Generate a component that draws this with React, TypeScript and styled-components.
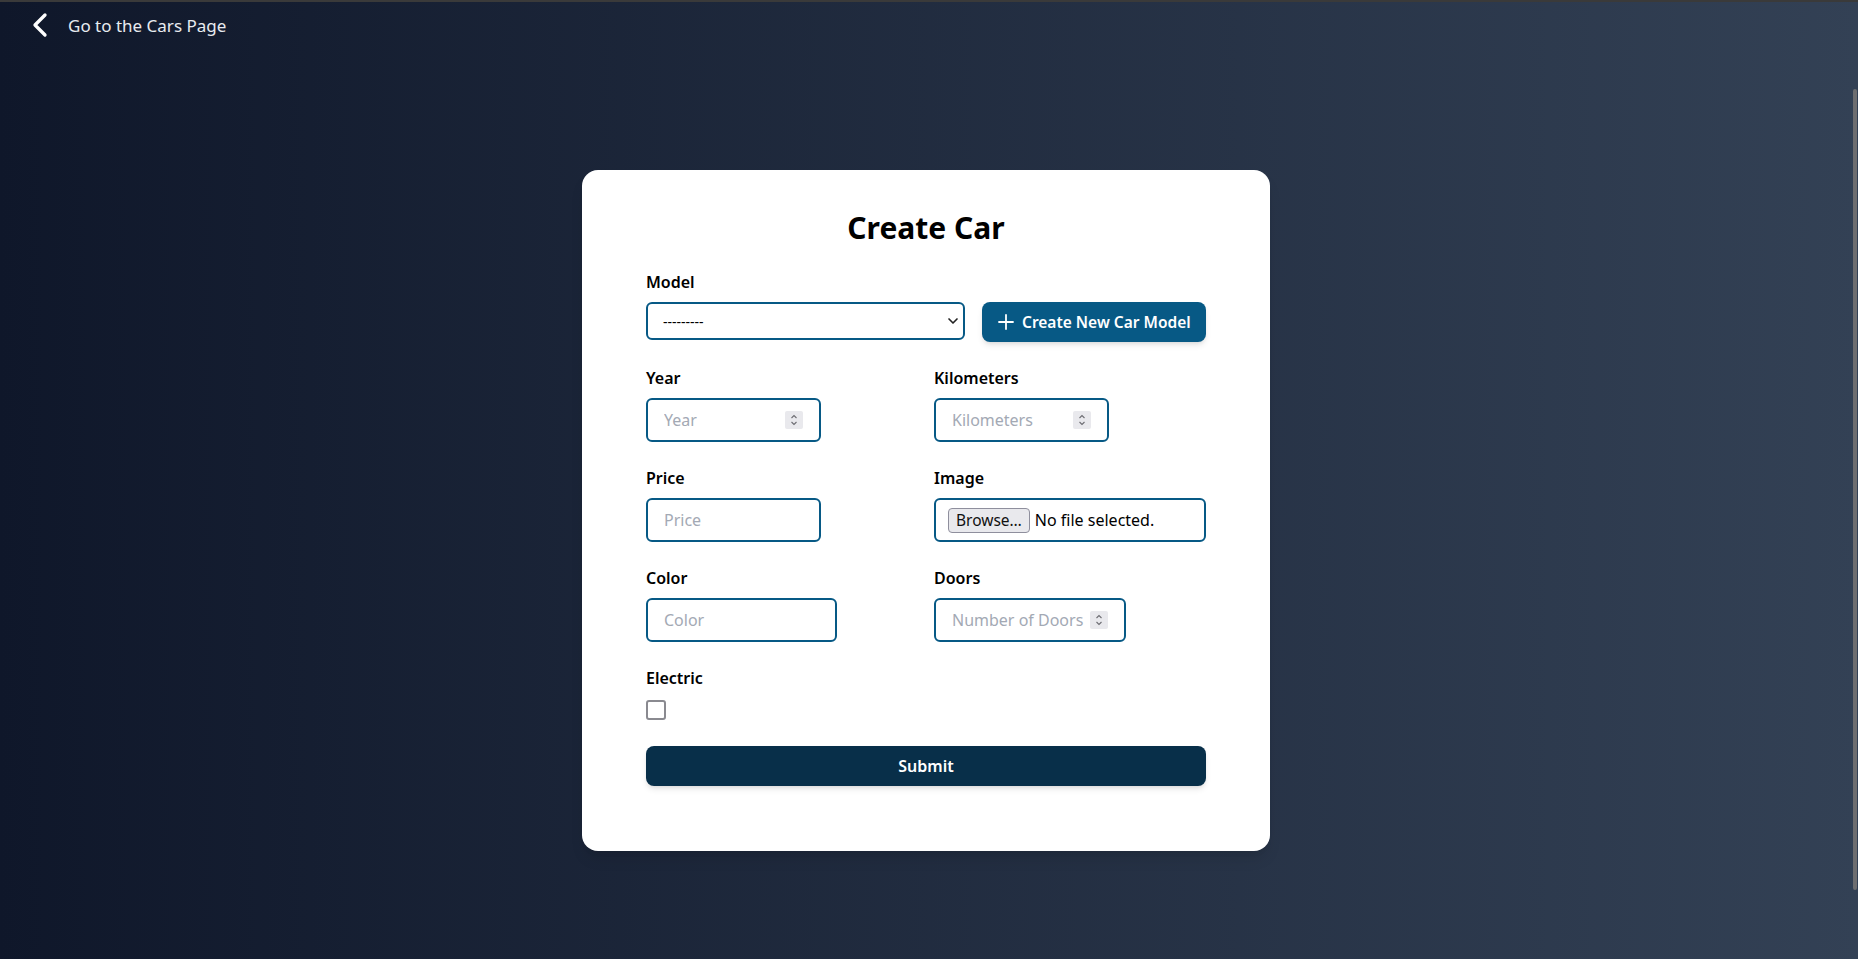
import React from 'react';
import styled, { createGlobalStyle } from 'styled-components';
import { ChevronLeft, ChevronDown, Plus } from 'lucide-react';

const GlobalStyle = createGlobalStyle`
  * {
    box-sizing: border-box;
  }

  body {
    margin: 0;
    font-family: 'Noto Sans', 'Liberation Sans', sans-serif;
    overflow: hidden;
  }
`;

const Page = styled.div`
  display: flex;
  flex-direction: column;
  height: 100vh;
  border-top: 2px solid #3a3a3a;
  background: linear-gradient(to right, #0f172a, #334155);
`;

const TopBar = styled.header`
  display: flex;
  align-items: center;
  height: 46px;
  padding-left: 20px;
`;

const BackLink = styled.a`
  display: flex;
  align-items: center;
  gap: 8px;
  font-size: 17px;
  color: #e8ebf0;
  text-decoration: none;
  cursor: pointer;
`;

const Main = styled.main`
  display: flex;
  justify-content: center;
  padding: 122px 6px 0 0;
`;

const Card = styled.section`
  width: 688px;
  padding: 40px 64px 65px;
  background: #fff;
  border-radius: 16px;
  box-shadow: 0 10px 15px -3px rgba(0, 0, 0, 0.1), 0 4px 6px -4px rgba(0, 0, 0, 0.1);
`;

const Title = styled.h1`
  margin: 0 0 24px;
  font-size: 30px;
  line-height: 36px;
  font-weight: 700;
  text-align: center;
  color: #000;
`;

const Form = styled.form`
  display: flex;
  flex-direction: column;
  gap: 24px;
`;

const Grid = styled.div`
  display: grid;
  grid-template-columns: 1fr 1fr;
  column-gap: 16px;
  row-gap: 24px;
  align-items: start;
`;

const Field = styled.div`
  display: flex;
  flex-direction: column;
  align-items: flex-start;
`;

const Label = styled.label`
  display: block;
  margin-bottom: 8px;
  font-size: 16px;
  line-height: 24px;
  font-weight: 600;
  color: #000;
`;

const ModelRow = styled.div`
  display: flex;
  align-items: flex-start;
  gap: 17px;
  width: 100%;
`;

const SelectBox = styled.div`
  display: flex;
  align-items: center;
  flex: 1;
  height: 38px;
  padding: 0 2px 0 15px;
  border: 2px solid #075985;
  border-radius: 6px;
  color: #222;
`;

const Select = styled.select`
  flex: 1;
  min-width: 0;
  height: 100%;
  padding: 0;
  border: none;
  outline: none;
  appearance: none;
  background: transparent;
  font-family: inherit;
  font-size: 14px;
  color: #000;
`;

const PrimaryButton = styled.button`
  display: flex;
  align-items: center;
  gap: 4px;
  width: 224px;
  height: 40px;
  padding: 0 0 0 12px;
  border: none;
  border-radius: 8px;
  background: #075985;
  color: #fff;
  font-family: inherit;
  font-size: 15.5px;
  font-weight: 600;
  white-space: nowrap;
  box-shadow: 0 4px 6px -1px rgba(0, 0, 0, 0.1), 0 2px 4px -2px rgba(0, 0, 0, 0.1);
  cursor: pointer;
`;

interface BoxProps {
  $width?: number;
}

const InputBox = styled.div<BoxProps>`
  display: flex;
  align-items: center;
  width: ${(props) => (props.$width ? `${props.$width}px` : '100%')};
  height: 44px;
  padding: 0 16px;
  border: 2px solid #075985;
  border-radius: 6px;
  background: #fff;
`;

const FileBox = styled(InputBox)`
  padding: 0 12px;
`;

const Input = styled.input`
  flex: 1;
  min-width: 0;
  padding: 0;
  border: none;
  outline: none;
  background: transparent;
  font-family: inherit;
  font-size: 16px;
  color: #000;
  -moz-appearance: textfield;

  &::placeholder {
    color: #a3a9b4;
  }

  &::-webkit-inner-spin-button,
  &::-webkit-outer-spin-button {
    -webkit-appearance: none;
    margin: 0;
  }
`;

const Spinner = styled.span`
  display: flex;
  flex-direction: column;
  align-items: center;
  justify-content: center;
  width: 18px;
  height: 18px;
  margin-left: 6px;
  border-radius: 2px;
  background: #e9e9ed;
  color: #6d6d72;
`;

const BrowseButton = styled.span`
  display: flex;
  align-items: center;
  height: 25px;
  padding: 0 7px;
  border: 1px solid #8f8f9d;
  border-radius: 4px;
  background: #e9e9ed;
  font-size: 15.5px;
  color: #111;
`;

const FileText = styled.span`
  margin-left: 5px;
  font-size: 16px;
  color: #000;
`;

const CheckRow = styled.div`
  display: flex;
  align-items: center;
  height: 24px;
`;

const Checkbox = styled.input`
  width: 20px;
  height: 20px;
  margin: 0;
  appearance: none;
  border: 2px solid #8a8a90;
  border-radius: 3px;
  background: #fff;
`;

const SubmitButton = styled.button`
  width: 100%;
  height: 40px;
  border: none;
  border-radius: 8px;
  background: #082f49;
  color: #fff;
  font-family: inherit;
  font-size: 16px;
  font-weight: 600;
  box-shadow: 0 4px 6px -1px rgba(0, 0, 0, 0.1), 0 2px 4px -2px rgba(0, 0, 0, 0.1);
  cursor: pointer;
`;

const ScrollThumb = styled.div`
  position: fixed;
  top: 89px;
  right: 1px;
  width: 4px;
  height: 801px;
  border-radius: 2px;
  background: #6e6e70;
`;

const SpinArrows = () => (
  <Spinner>
    <svg width="8" height="14" viewBox="0 0 8 14" fill="none" stroke="currentColor" strokeWidth="1.1">
      <path d="M1.5 5 4 2.5 6.5 5" />
      <path d="M1.5 9 4 11.5 6.5 9" />
    </svg>
  </Spinner>
);

interface NumberFieldProps {
  label: string;
  placeholder: string;
  width: number;
}

const NumberField: React.FC<NumberFieldProps> = ({ label, placeholder, width }) => (
  <Field>
    <Label>{label}</Label>
    <InputBox $width={width}>
      <Input type="number" placeholder={placeholder} />
      <SpinArrows />
    </InputBox>
  </Field>
);

const App: React.FC = () => (
  <>
    <GlobalStyle />
    <Page>
      <TopBar>
        <BackLink>
          <ChevronLeft size={40} strokeWidth={2} color="#fff" />
          Go to the Cars Page
        </BackLink>
      </TopBar>
      <Main>
        <Card>
          <Title>Create Car</Title>
          <Form onSubmit={(e) => e.preventDefault()}>
            <Field>
              <Label>Model</Label>
              <ModelRow>
                <SelectBox>
                  <Select defaultValue="">
                    <option value="">---------</option>
                  </Select>
                  <ChevronDown size={16} strokeWidth={2.5} />
                </SelectBox>
                <PrimaryButton type="button">
                  <Plus size={24} strokeWidth={1.8} />
                  Create New Car Model
                </PrimaryButton>
              </ModelRow>
            </Field>
            <Grid>
              <NumberField label="Year" placeholder="Year" width={175} />
              <NumberField label="Kilometers" placeholder="Kilometers" width={175} />
              <Field>
                <Label>Price</Label>
                <InputBox $width={175}>
                  <Input type="text" placeholder="Price" />
                </InputBox>
              </Field>
              <Field>
                <Label>Image</Label>
                <FileBox>
                  <BrowseButton>Browse…</BrowseButton>
                  <FileText>No file selected.</FileText>
                </FileBox>
              </Field>
              <Field>
                <Label>Color</Label>
                <InputBox $width={191}>
                  <Input type="text" placeholder="Color" />
                </InputBox>
              </Field>
              <NumberField label="Doors" placeholder="Number of Doors" width={192} />
            </Grid>
            <Field>
              <Label>Electric</Label>
              <CheckRow>
                <Checkbox type="checkbox" />
              </CheckRow>
            </Field>
            <SubmitButton type="submit">Submit</SubmitButton>
          </Form>
        </Card>
      </Main>
      <ScrollThumb />
    </Page>
  </>
);

export default App;
